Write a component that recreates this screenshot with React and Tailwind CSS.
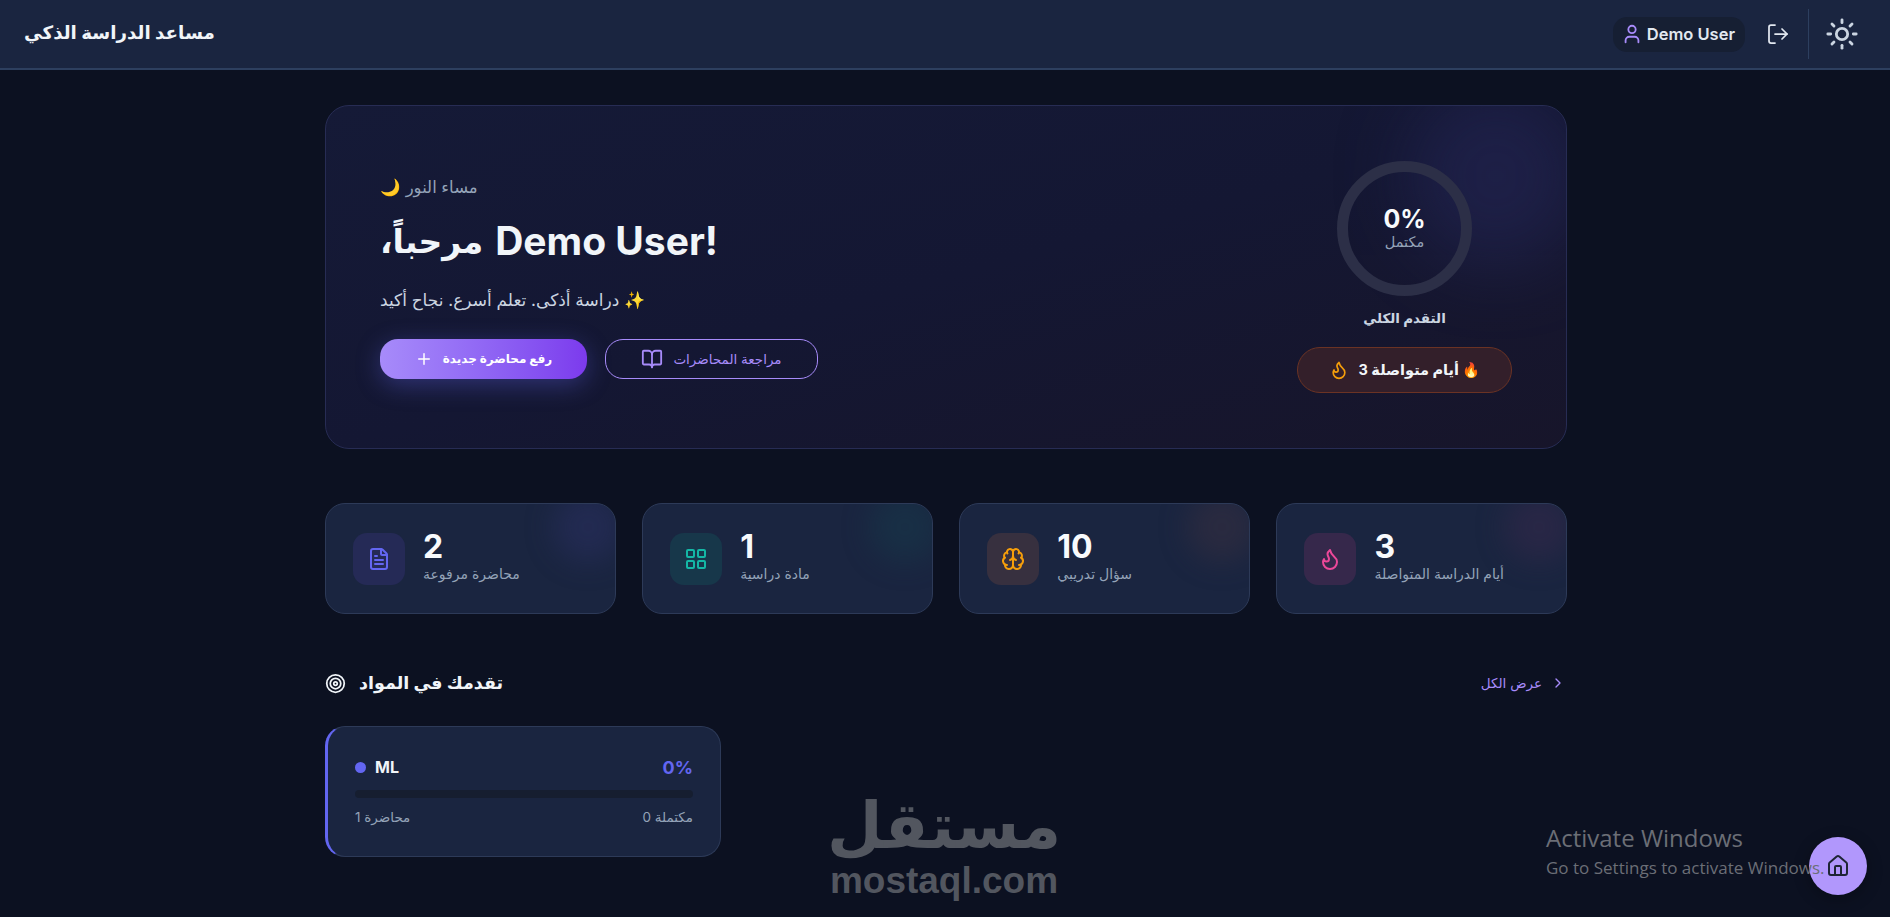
import React from 'react';
import { User, LogOut, Sun, Plus, BookOpen, Flame, FileText, LayoutGrid, Brain, Target, ChevronLeft, Home } from 'lucide-react';

const ar = { fontFamily: 'Inter, "DejaVu Sans", sans-serif' };

function Stat({ value, label, Icon, iconClass, tile, glow }) {
  return (
    <div className="relative flex h-[111px] items-center gap-[18px] overflow-hidden rounded-[20px] border border-[#2d3a58] bg-[#1a2540] pl-[27px]">
      <div className={`absolute -right-[8px] -top-[12px] h-[70px] w-[70px] rounded-full opacity-50 blur-[14px] ${glow}`} />
      <div className={`flex h-[52px] w-[52px] items-center justify-center rounded-[14px] ${tile}`}>
        <Icon className={`h-[24px] w-[24px] ${iconClass}`} strokeWidth={2} />
      </div>
      <div className="relative flex flex-col pb-[3px]">
        <span className="text-[32px] font-bold leading-[34px] text-[#f8fafc]">{value}</span>
        <span dir="rtl" className="text-left text-[14px] leading-[20px] text-[#94a3b8]" style={ar}>{label}</span>
      </div>
    </div>
  );
}

export default function App() {
  return (
    <div className="relative h-[917px] overflow-hidden bg-[#0c1121] font-['Inter',sans-serif]">
      <header className="flex h-[70px] items-center justify-between border-b-2 border-[#2d3f5f] bg-[#1a2540] pl-[24px] pr-[31px]">
        <span dir="rtl" className="pb-[2px] text-[18.3px] font-bold text-[#f1f5f9]" style={ar}>مساعد الدراسة الذكي</span>
        <div className="flex items-center">
          <div className="flex h-[35px] items-center gap-[4px] rounded-[14px] bg-[#161f33] pl-[8px] pr-[10px]">
            <User className="h-[22px] w-[22px] text-[#a78bfa]" strokeWidth={2} />
            <span className="text-[16.5px] font-semibold text-[#e2e8f0]">Demo User</span>
          </div>
          <LogOut className="ml-[21px] h-[24px] w-[24px] text-[#e2e8f0]" strokeWidth={1.75} />
          <div className="ml-[18px] h-[50px] w-px bg-[#2d3f5f]" />
          <Sun className="ml-[16px] h-[34px] w-[34px] text-[#cbd5e1]" strokeWidth={2} />
        </div>
      </header>

      <main className="ml-[325px] w-[1242px] pt-[35px]">
        <section className="relative flex h-[344px] items-center justify-between overflow-hidden rounded-[24px] border border-[#272c54] bg-gradient-to-br from-[#151a37] via-[#141733] to-[#17152a] pl-[54px] pr-[54px]">
          <div className="absolute -right-[20px] -top-[20px] h-[180px] w-[180px] rounded-full bg-[#222450] opacity-70 blur-[35px]" />
          <div className="relative flex flex-col items-start pt-[1px]">
            <div dir="rtl" className="text-[16.5px] leading-[22px] text-[#94a3b8]" style={ar}>مساء النور 🌙</div>
            <h1 className="mt-[19px] flex items-center gap-[12px] text-[39px] font-bold leading-[48px] text-[#f1f5f9]">
              <span dir="rtl" className="text-[33px]" style={ar}>مرحباً،</span>
              <span>Demo User!</span>
            </h1>
            <div dir="rtl" className="mt-[23px] text-[17px] leading-[24px] text-[#cbd5e1]" style={ar}>✨ دراسة أذكى. تعلم أسرع. نجاح أكيد</div>
            <div className="mt-[27px] flex items-center gap-[18px]">
              <button className="flex h-[40px] w-[207px] items-center justify-center gap-[10px] rounded-[18px] bg-gradient-to-r from-[#a78bfa] to-[#7c3aed] text-white shadow-[0_6px_24px_rgba(99,102,241,0.35)]">
                <Plus className="h-[18px] w-[18px]" strokeWidth={2} />
                <span dir="rtl" className="text-[12px] font-bold" style={ar}>رفع محاضرة جديدة</span>
              </button>
              <button className="flex h-[40px] w-[213px] items-center justify-center gap-[10px] rounded-[18px] border border-[#a78bfa] text-[#a78bfa]">
                <BookOpen className="h-[22px] w-[22px]" strokeWidth={2} />
                <span dir="rtl" className="text-[13.5px]" style={ar}>مراجعة المحاضرات</span>
              </button>
            </div>
          </div>
          <div className="relative flex flex-col items-center">
            <div className="flex h-[135px] w-[135px] flex-col items-center justify-center rounded-full border-[11px] border-[#2c2f47] pb-[2px]">
              <span className="text-[25px] font-bold leading-[28px] text-[#f8fafc]">0%</span>
              <span dir="rtl" className="text-[14.5px] leading-[18px] text-[#94a3b8]" style={ar}>مكتمل</span>
            </div>
            <div dir="rtl" className="mt-[10px] text-[13.5px] font-bold leading-[24px] text-[#cbd5e1]" style={ar}>التقدم الكلي</div>
            <div className="mt-[17px] flex h-[46px] w-[215px] items-center justify-center gap-[10px] rounded-full border border-[#6b3324] bg-[#331f2a]">
              <Flame className="h-[20px] w-[20px] text-[#f59e0b]" strokeWidth={2} />
              <span dir="rtl" className="text-[14.5px] font-bold text-[#f1f5f9]" style={ar}>🔥 أيام متواصلة 3</span>
            </div>
          </div>
        </section>

        <section className="mt-[54px] grid grid-cols-4 gap-[26.5px]">
          <Stat value="2" label="محاضرة مرفوعة" Icon={FileText} iconClass="text-[#6366f1]" tile="bg-[#252a56]" glow="bg-[#2b3063]" />
          <Stat value="1" label="مادة دراسية" Icon={LayoutGrid} iconClass="text-[#14b8a6]" tile="bg-[#17374a]" glow="bg-[#173a4b]" />
          <Stat value="10" label="سؤال تدريبي" Icon={Brain} iconClass="text-[#f59e0b]" tile="bg-[#37303f]" glow="bg-[#3a3040]" />
          <Stat value="3" label="أيام الدراسة المتواصلة" Icon={Flame} iconClass="text-[#ec4899]" tile="bg-[#36284b]" glow="bg-[#37294c]" />
        </section>

        <section className="mt-[55px]">
          <div className="flex h-[28px] items-center justify-between">
            <div className="flex items-center gap-[13px]">
              <Target className="h-[21px] w-[21px] text-[#f1f5f9]" strokeWidth={2} />
              <h2 dir="rtl" className="text-[17.5px] font-bold text-[#f1f5f9]" style={ar}>تقدمك في المواد</h2>
            </div>
            <div className="flex items-center gap-[8px] pr-[1px] text-[#a78bfa]">
              <span dir="rtl" className="text-[13.5px]" style={ar}>عرض الكل</span>
              <ChevronLeft className="h-[16px] w-[16px] -scale-x-100" strokeWidth={2} />
            </div>
          </div>
          <div className="mt-[29px] flex h-[131px] w-[396px] flex-col justify-center rounded-[20px] border border-[#2d3a58] border-l-[3px] border-l-[#6366f1] bg-[#1a2540] pb-[2px] pl-[27px] pr-[27px]">
            <div className="flex items-center justify-between">
              <div className="flex items-center gap-[9px]">
                <span className="h-[11px] w-[11px] rounded-full bg-[#6366f1]" />
                <span className="text-[16px] font-bold text-[#f1f5f9]">ML</span>
              </div>
              <span className="text-[18px] font-bold text-[#6366f1]">0%</span>
            </div>
            <div className="mt-[9px] h-[8px] rounded-full bg-[#161e30]" />
            <div className="mt-[9px] flex items-center justify-between text-[13.5px] text-[#94a3b8]" style={ar}>
              <span dir="rtl">محاضرة 1</span>
              <span dir="rtl">مكتملة 0</span>
            </div>
          </div>
        </section>

        <section className="mt-[55px] flex h-[28px] items-center">
          <Target className="h-[21px] w-[21px] text-[#f1f5f9]" strokeWidth={2} />
        </section>
      </main>

      <div className="absolute bottom-[22px] right-[23px] flex h-[58px] w-[58px] items-center justify-center rounded-full bg-[#b197fc] shadow-[0_4px_16px_rgba(0,0,0,0.3)]">
        <Home className="h-[24px] w-[24px] text-[#1e2535]" strokeWidth={2} />
      </div>

      <div className="pointer-events-none absolute left-[1546px] top-[822px] whitespace-nowrap font-['Open_Sans',sans-serif] text-[#6b6e76]">
        <div className="text-[24px] leading-[32px]">Activate Windows</div>
        <div className="text-[17px] leading-[28px]">Go to Settings to activate Windows.</div>
      </div>

      <div className="pointer-events-none absolute left-[830px] top-[789px] flex w-[228px] flex-col items-center text-[#52565f]">
        <span dir="rtl" className="text-[64px] font-bold leading-[72px]" style={ar}>مستقل</span>
        <span className="font-['Liberation_Sans',sans-serif] text-[37px] font-bold leading-[40px]">mostaql.com</span>
      </div>
    </div>
  );
}
